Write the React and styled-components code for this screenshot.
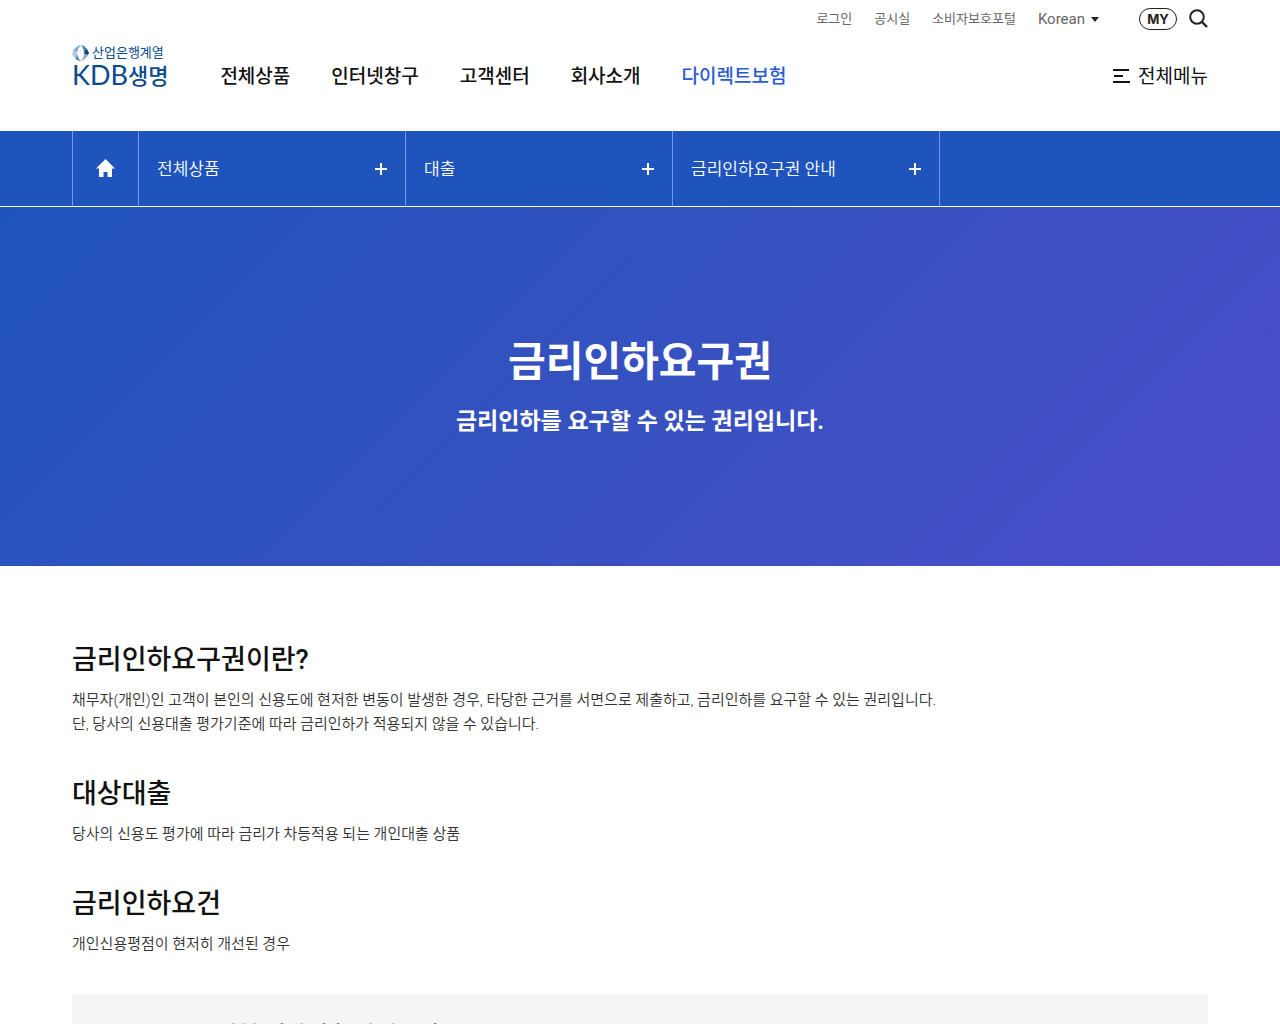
import React from "react";
import styled, { createGlobalStyle } from "styled-components";

const GlobalStyle = createGlobalStyle`
  * {
    box-sizing: border-box;
  }
  body {
    margin: 0;
    background: #fff;
    color: #111;
    font-family: Roboto, "Noto Sans CJK KR", sans-serif;
    font-size: 15px;
  }
  h1, h2, h3, p, ul {
    margin: 0;
    padding: 0;
  }
  ul {
    list-style: none;
  }
  a {
    color: inherit;
    text-decoration: none;
  }
  button {
    padding: 0;
    border: none;
    background: none;
    color: inherit;
    font: inherit;
    cursor: pointer;
  }
`;

const Header = styled.header`
  padding: 0 72px 40px;
`;

const Utility = styled.div`
  display: flex;
  justify-content: flex-end;
  align-items: center;
  height: 38px;
`;

const UtilityLinks = styled.ul`
  display: flex;
  align-items: center;
  gap: 22px;
  margin-right: 40px;
  color: #666;
  font-size: 13px;
  line-height: 20px;
`;

const Language = styled.button`
  display: flex;
  align-items: center;
  gap: 6px;
  font-size: 15px;
  line-height: 20px;
`;

const MyLink = styled.a`
  display: flex;
  align-items: center;
  justify-content: center;
  width: 38px;
  height: 22px;
  margin-right: 12px;
  border: 1px solid #222;
  border-radius: 11px;
  color: #222;
  font: 700 13px Inter, sans-serif;
`;

const IconButton = styled.button`
  display: flex;
`;

const MainRow = styled.div`
  display: flex;
  align-items: flex-end;
  height: 53px;
`;

const Logo = styled.a`
  display: block;
  margin-right: 52px;
  padding-bottom: 3px;
  color: #0b4a8f;
  white-space: nowrap;
`;

const LogoGroup = styled.span`
  display: flex;
  align-items: center;
  gap: 3px;
  font-size: 13px;
  line-height: 18px;
`;

const LogoName = styled.span`
  display: flex;
  align-items: flex-start;
  font: 400 27px/26px Lato, sans-serif;
`;

const LogoKorean = styled.span`
  font: 500 22px/24px "Noto Sans CJK KR", sans-serif;
`;

const Nav = styled.nav`
  flex: 1;
  ul {
    display: flex;
    gap: 41px;
  }
`;

const NavLink = styled.a`
  color: ${(props) => (props.$active ? "#2a5bd7" : "#111")};
  font-size: 19px;
  font-weight: 500;
  line-height: 28px;
`;

const AllMenu = styled.button`
  display: flex;
  align-items: center;
  gap: 8px;
  font-size: 19px;
  line-height: 28px;
`;

const Breadcrumb = styled.nav`
  padding: 0 72px;
  background: #2054bd;
  border-bottom: 1px solid #fff;
  color: #fff;
`;

const Crumbs = styled.ul`
  display: flex;
  height: 75px;
  border-left: 1px solid #6f98e6;
`;

const Crumb = styled.li`
  flex: 0 1 ${(props) => (props.$home ? "66px" : "267px")};
  border-right: 1px solid #6f98e6;
`;

const HomeLink = styled.a`
  display: flex;
  align-items: center;
  justify-content: center;
  height: 74px;
`;

const CrumbButton = styled.button`
  display: flex;
  align-items: center;
  justify-content: space-between;
  width: 100%;
  height: 75px;
  padding: 0 18px;
  font-size: 17px;
  font-weight: 350;
  line-height: 24px;
`;

const Hero = styled.section`
  padding: 125px 20px 126px;
  background: linear-gradient(135deg, #2054bd 0%, #3651c0 50%, #4c4cc9 100%);
  color: #fff;
  text-align: center;
`;

const HeroTitle = styled.h1`
  font-size: 41px;
  font-weight: 700;
  line-height: 60px;
`;

const HeroText = styled.p`
  margin-top: 12px;
  font-size: 23px;
  font-weight: 700;
  line-height: 36px;
`;

const Content = styled.main`
  padding: 74px 72px 0;
`;

const Section = styled.section`
  margin-bottom: 38px;
`;

const SectionTitle = styled.h2`
  margin-bottom: 8px;
  font-size: 27px;
  font-weight: 500;
  line-height: 40px;
`;

const Text = styled.p`
  color: #333;
  font-weight: 350;
  line-height: 24px;
`;

const GuideBox = styled.section`
  padding: 24px 144px 40px;
  background: #f4f4f4;
`;

const GuideTitle = styled.h3`
  font-size: 23px;
  font-weight: 500;
  line-height: 36px;
`;

const menus = ["전체상품", "인터넷창구", "고객센터", "회사소개", "다이렉트보험"];
const crumbs = ["전체상품", "대출", "금리인하요구권 안내"];

const sections = [
  {
    title: "금리인하요구권이란?",
    lines: [
      "채무자(개인)인 고객이 본인의 신용도에 현저한 변동이 발생한 경우, 타당한 근거를 서면으로 제출하고, 금리인하를 요구할 수 있는 권리입니다.",
      "단, 당사의 신용대출 평가기준에 따라 금리인하가 적용되지 않을 수 있습니다.",
    ],
  },
  {
    title: "대상대출",
    lines: ["당사의 신용도 평가에 따라 금리가 차등적용 되는 개인대출 상품"],
  },
  {
    title: "금리인하요건",
    lines: ["개인신용평점이 현저히 개선된 경우"],
  },
];

const LogoMark = () => (
  <svg width="17" height="16" viewBox="0 0 17 16" aria-hidden="true">
    <path d="M9 0Q4 1 1 6L5 7Q6 3 9 0Z" fill="#7fa9d0" />
    <path d="M1 6 0 9Q1 12 4 14L5 7Z" fill="#b4cfe6" />
    <path d="M5 8 4 14Q6 16 9 16Q5 13 5 8Z" fill="#2f6fad" />
    <path d="M9 0Q13 1 14 3L12 9Q12 3 9 0Z" fill="#3d7ab5" />
    <path d="M14 3Q16 5 17 8L16 10 12 9Z" fill="#0d4383" />
    <path d="M12 9 16 10Q14 14 9 16Q12 13 12 9Z" fill="#87a9cb" />
  </svg>
);

const SearchIcon = () => (
  <svg width="19" height="20" viewBox="0 0 19 20" fill="none" stroke="#222" strokeWidth="2" aria-hidden="true">
    <circle cx="8" cy="8" r="6.8" />
    <path d="m13 13 5 5" strokeWidth="2.4" />
  </svg>
);

const MenuIcon = () => (
  <svg width="17" height="16" viewBox="0 0 17 16" stroke="#111" strokeWidth="2" aria-hidden="true">
    <path d="M0 1h16M1 7h9M0 13h17" />
  </svg>
);

const HomeIcon = () => (
  <svg width="19" height="18" viewBox="0 0 19 18" fill="#fff" aria-hidden="true">
    <path d="M9.5 0 19 9.5H16V18H11.5V13H7.5V18H3V9.5H0Z" />
  </svg>
);

const PlusIcon = () => (
  <svg width="12" height="12" viewBox="0 0 12 12" stroke="#fff" strokeWidth="2" aria-hidden="true">
    <path d="M6 0v12M0 6h12" />
  </svg>
);

const App = () => {
  return (
    <>
      <GlobalStyle />
      <Header>
        <Utility>
          <UtilityLinks>
            <li><a href="#login">로그인</a></li>
            <li><a href="#disclosure">공시실</a></li>
            <li><a href="#consumer">소비자보호포털</a></li>
            <li>
              <Language type="button">
                Korean
                <svg width="8" height="5" viewBox="0 0 8 5" fill="#222" aria-hidden="true">
                  <path d="M0 0h8L4 5Z" />
                </svg>
              </Language>
            </li>
          </UtilityLinks>
          <MyLink href="#my">MY</MyLink>
          <IconButton type="button" aria-label="검색">
            <SearchIcon />
          </IconButton>
        </Utility>
        <MainRow>
          <Logo href="#home">
            <LogoGroup>
              <LogoMark />
              산업은행계열
            </LogoGroup>
            <LogoName>
              KDB
              <LogoKorean>생명</LogoKorean>
            </LogoName>
          </Logo>
          <Nav>
            <ul>
              {menus.map((menu) => (
                <li key={menu}>
                  <NavLink href="#menu" $active={menu === "다이렉트보험"}>{menu}</NavLink>
                </li>
              ))}
            </ul>
          </Nav>
          <AllMenu type="button">
            <MenuIcon />
            전체메뉴
          </AllMenu>
        </MainRow>
      </Header>
      <Breadcrumb>
        <Crumbs>
          <Crumb $home>
            <HomeLink href="#home" aria-label="홈">
              <HomeIcon />
            </HomeLink>
          </Crumb>
          {crumbs.map((crumb) => (
            <Crumb key={crumb}>
              <CrumbButton type="button">
                {crumb}
                <PlusIcon />
              </CrumbButton>
            </Crumb>
          ))}
        </Crumbs>
      </Breadcrumb>
      <Hero>
        <HeroTitle>금리인하요구권</HeroTitle>
        <HeroText>금리인하를 요구할 수 있는 권리입니다.</HeroText>
      </Hero>
      <Content>
        {sections.map((section) => (
          <Section key={section.title}>
            <SectionTitle>{section.title}</SectionTitle>
            {section.lines.map((line) => (
              <Text key={line}>{line}</Text>
            ))}
          </Section>
        ))}
        <GuideBox>
          <GuideTitle>신청 대상대출 자격요건</GuideTitle>
        </GuideBox>
      </Content>
    </>
  );
};

export default App;
